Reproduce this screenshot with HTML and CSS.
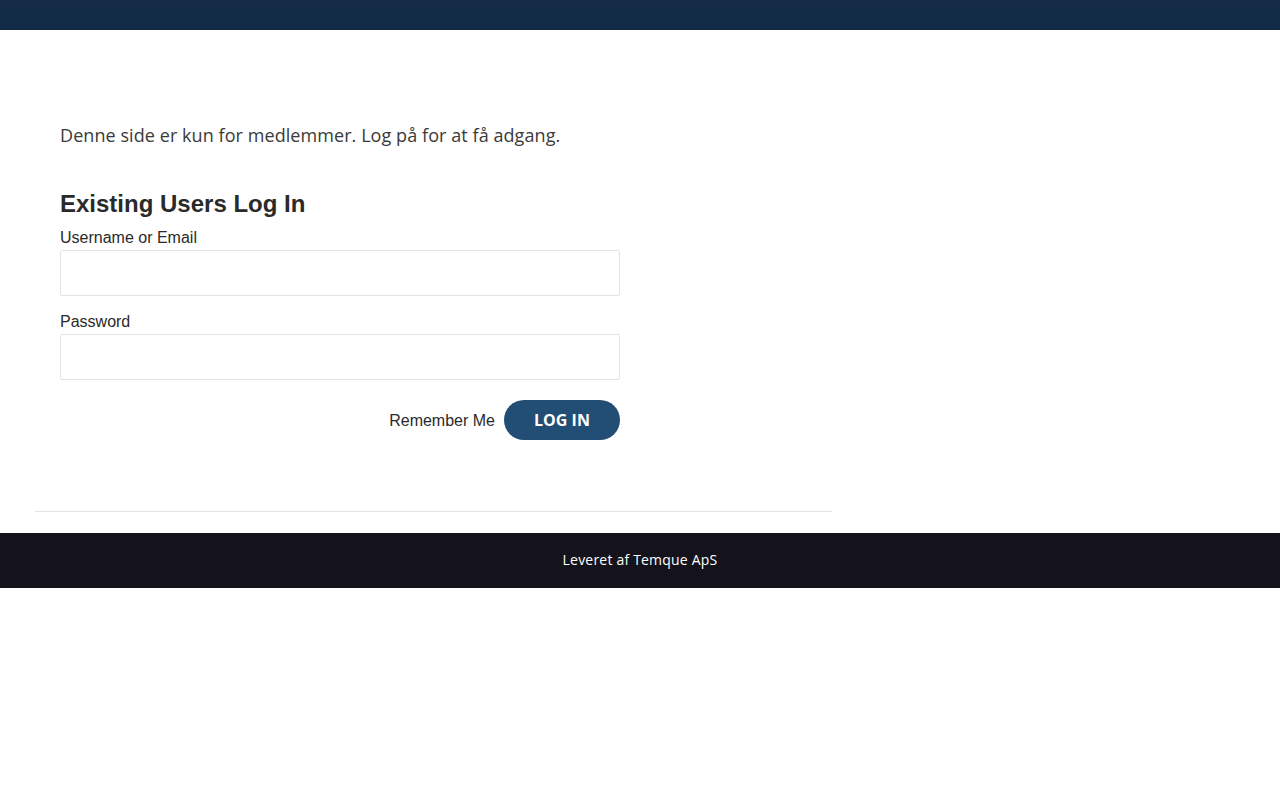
FILE: index.html
```html
<!DOCTYPE html>
<html lang="da">
<head>
    <meta charset="UTF-8">
    <meta name="viewport" content="width=device-width, initial-scale=1.0">
    <title>Log på</title>
    <link rel="stylesheet" href="styles.css">
</head>
<body>
    <header class="top-bar"></header>

    <main class="site-main">
        <div class="content">
            <p class="notice">Denne side er kun for medlemmer. Log på for at få adgang.</p>

            <form class="login-form">
                <h2>Existing Users Log In</h2>

                <div class="field">
                    <label for="user_login">Username or Email</label>
                    <input type="text" id="user_login" name="log">
                </div>

                <div class="field">
                    <label for="user_pass">Password</label>
                    <input type="password" id="user_pass" name="pwd">
                </div>

                <div class="submit-row">
                    <label for="rememberme">Remember Me</label>
                    <button type="submit">Log In</button>
                </div>
            </form>
        </div>
        <hr class="divider">
    </main>

    <footer class="site-footer">
        Leveret af Temque ApS
    </footer>
</body>
</html>
```

FILE: styles.css
```css
body {
    margin: 0;
    padding: 0;
    background-color: #ffffff;
    font-family: "Open Sans", sans-serif;
    color: #333;
}

.top-bar {
    height: 30px;
    background: linear-gradient(#142c48, #112a46);
}

.site-main {
    width: 797px;
    margin-left: 35px;
    padding-top: 92px;
}

.content {
    padding: 0 25px 50px;
}

.notice {
    margin: 0 0 40px;
    font-size: 18px;
    line-height: 27px;
    letter-spacing: 0.07px;
    color: #3a3a3a;
}

.login-form {
    width: 560px;
    font-family: "Liberation Sans", Arial, sans-serif;
    color: #2a2a2a;
}

.login-form h2 {
    margin: 0 0 10px;
    font-size: 24px;
    line-height: 29px;
    font-weight: bold;
}

.field {
    margin-bottom: 16px;
}

.field label {
    display: block;
    font-size: 16px;
    line-height: 19px;
    margin-bottom: 3px;
}

.field input {
    display: block;
    width: 100%;
    height: 46px;
    box-sizing: border-box;
    border: 1px solid #e3e3e3;
    border-radius: 2px;
    padding: 0 12px;
    font-size: 16px;
    background: #ffffff;
}

.submit-row {
    display: flex;
    justify-content: flex-end;
    align-items: center;
    gap: 9px;
    margin-top: 20px;
}

.submit-row label {
    font-size: 16px;
    padding-top: 2px;
    color: #2a2a2a;
}

.submit-row button {
    height: 40px;
    width: 116px;
    border: none;
    border-radius: 20px;
    background-color: #224e75;
    color: #ffffff;
    font-family: "Open Sans", sans-serif;
    font-weight: bold;
    font-size: 16px;
    text-transform: uppercase;
    cursor: pointer;
}

.divider {
    margin: 21px 0 21px;
    border: none;
    border-top: 1px solid #e2e2e2;
}

.site-footer {
    height: 55px;
    box-sizing: border-box;
    background-color: #14131c;
    color: #ffffff;
    font-size: 14px;
    line-height: 53px;
    letter-spacing: 0.2px;
    text-align: center;
}
```
